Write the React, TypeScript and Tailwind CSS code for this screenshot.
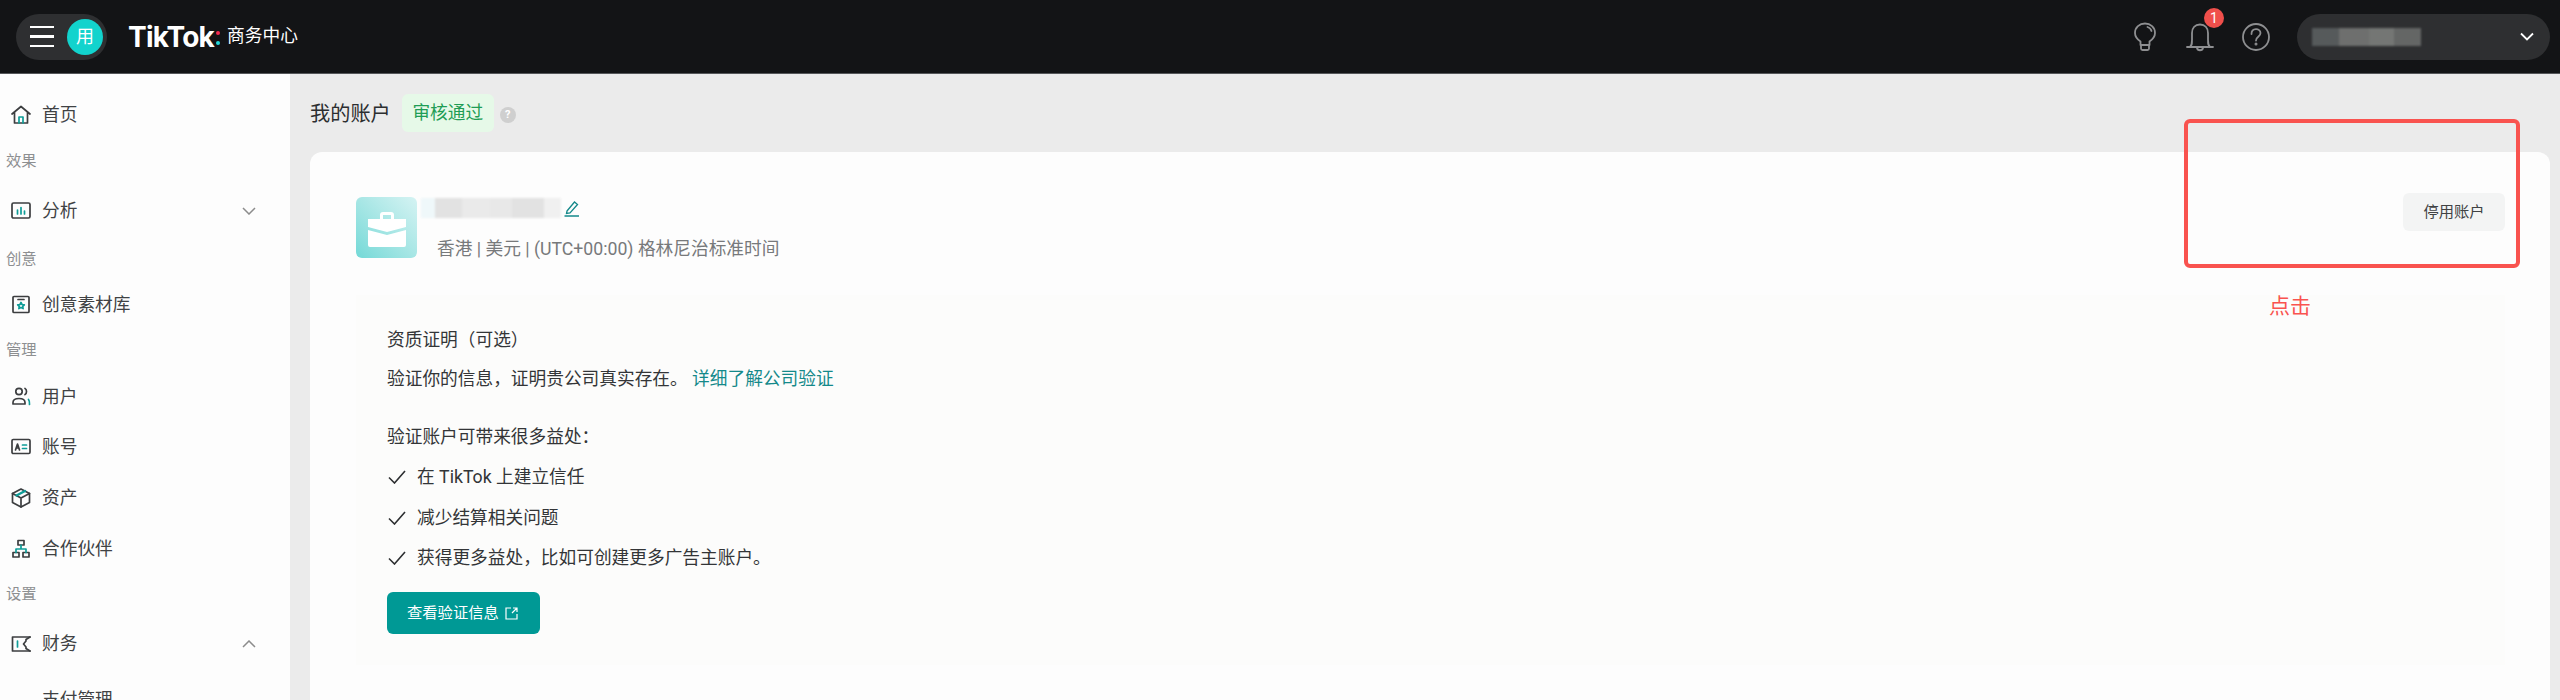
import React from "react";

const font = { fontFamily: 'Roboto, "Noto Sans CJK SC", sans-serif' };

function I({ children, size = 22 }: { children: React.ReactNode; size?: number }) {
  return (
    <svg width={size} height={size} viewBox="0 0 22 22" fill="none" strokeWidth="1.7" stroke="#3c3e40" strokeLinecap="round" strokeLinejoin="round" className="shrink-0">
      {children}
    </svg>
  );
}
const T = "#0f9d98";

const HomeIcon = () => (
  <I>
    <path d="M2 10 11 2.500 20 10M4.500 8.500V19h13V8.500" />
    <path d="M9 19v-6h4v6" stroke={T} />
  </I>
);
const ChartIcon = () => (
  <I>
    <rect x="2" y="3" width="18" height="15" rx="1.500" />
    <path d="M7.500 14V10M11 14V7.500M14.500 14v-3" stroke={T} />
  </I>
);
const LibIcon = () => (
  <I>
    <rect x="3" y="2.500" width="16" height="16" rx="1" />
    <path d="M8 5.500h6" />
    <path d="m11 8.500 1 2 2.300.3-1.600 1.600.4 2.200-2.100-1-2.100 1 .4-2.200L7.700 10.800 10 10.500z" stroke={T} />
  </I>
);
const UserIcon = () => (
  <I>
    <circle cx="9" cy="5.500" r="3.200" />
    <path d="M3 18v-1.500C3 13.500 5 12.500 9 12.500s6 1 6 4V18z" />
    <path d="M15 2.500c2 1 2 5 0 6" />
    <path d="M18.500 13.500c1 1.300 1.200 3 1 5" stroke={T} />
  </I>
);
const CardIcon = () => (
  <I>
    <rect x="2" y="3.500" width="18" height="14" rx="1.200" />
    <path d="m5.500 14 2-6 2 6M6.300 12h2.400" />
    <path d="M12.500 9h4M12.500 12.500h4" stroke={T} />
  </I>
);
const BoxIcon = () => (
  <I>
    <path d="m11 2 8.500 4.500v9L11 20l-8.500-4.500v-9z" />
    <path d="M2.500 6.500 11 11l8.500-4.500M11 11v9" />
    <path d="m6.500 8.500 8.500-4.500" stroke={T} strokeWidth="2.500" />
  </I>
);
const OrgIcon = () => (
  <I>
    <rect x="8" y="2.500" width="6" height="4.500" />
    <rect x="3" y="14.500" width="6" height="4.500" />
    <rect x="13" y="14.500" width="6" height="4.500" />
    <path d="M11 7v4M6 14.500V11h10v3.500" stroke={T} />
  </I>
);
const WalletIcon = () => (
  <I>
    <path d="M20 4H2.500v14H20" />
    <path d="M20 4l-4 2.500v1.500l-2.500 3 2.500 3v1.500l4 2.500" />
    <path d="M7.500 8v6" stroke={T} />
  </I>
);

const Chevron = ({ up }: { up?: boolean }) => (
  <svg width="14" height="8" viewBox="0 0 14 8" fill="none" stroke="#8c8c8c" strokeWidth="1.500" className="absolute left-[242px]">
    <path d={up ? "M1 7l6-6 6 6" : "M1 1l6 6 6-6"} />
  </svg>
);

function Item({ icon, label, cls, chev }: { icon?: React.ReactNode; label: string; cls: string; chev?: "up" | "down" }) {
  return (
    <div className={`relative flex h-12 items-center pl-[10px] text-[17.700px] text-[#404244] ${cls}`}>
      <span className="flex w-[32px]">{icon}</span>
      <span>{label}</span>
      {chev && <Chevron up={chev === "up"} />}
    </div>
  );
}
function Group({ label, cls }: { label: string; cls: string }) {
  return <div className={`flex h-7 items-center pl-[6px] text-[15.300px] text-[#8d8f91] ${cls}`}>{label}</div>;
}

function Check({ text, cls }: { text: string; cls: string }) {
  return (
    <div className={`flex h-[26px] items-center ${cls}`}>
      <svg width="18" height="14" viewBox="0 0 18 14" fill="none" stroke="#2c2e30" strokeWidth="1.600" className="mr-[11px] ml-[1px]">
        <path d="M1 7.500 6.500 13 17 1" />
      </svg>
      <span>{text}</span>
    </div>
  );
}

export default function App() {
  return (
    <div style={font} className="relative flex h-[700px] w-[2560px] flex-col overflow-hidden bg-[#ebebeb]">
      <header className="flex h-[74px] shrink-0 items-center border-b border-[#55575a] bg-[#131416] pl-4 pr-[10px]">
        <div className="flex h-[46px] w-[91px] items-center rounded-full bg-[#2e2f31] pl-[14px]">
          <div className="flex w-[24px] flex-col gap-[7px]">
            <span className="h-[2.500px] bg-white"></span>
            <span className="h-[2.500px] bg-white"></span>
            <span className="h-[2.500px] bg-white"></span>
          </div>
          <div className="ml-[13px] flex h-9 w-9 items-center justify-center rounded-full bg-[#12d3cd] text-[18px] text-white">用</div>
        </div>
        <div className="ml-[21px] flex items-center">
          <span style={{ fontFamily: "Inter, sans-serif" }} className="text-[28px] font-bold leading-none tracking-[-0.8px] text-white">TikTok</span>
          <span className="ml-[2px] mt-[3px] flex flex-col gap-[6px]">
            <span className="h-[4px] w-[4px] rounded-full bg-[#f5294f]"></span>
            <span className="h-[4px] w-[4px] rounded-full bg-[#25d8d8]"></span>
          </span>
          <span className="ml-[7px] text-[17.700px] text-white">商务中心</span>
        </div>
        <div className="ml-auto flex items-center">
          <svg width="24" height="30" viewBox="0 0 24 30" fill="none" stroke="#8e8f91" strokeWidth="1.800" strokeLinecap="round" strokeLinejoin="round">
            <path d="M7.500 23v-3.500C4.500 17.500 2 14.500 2 11 2 5.500 6.500 1.500 12 1.500S22 5.500 22 11c0 3.500-2.500 6.500-5.500 8.500V23z" />
            <path d="M8 23v3.500c0 1 .5 1.500 1.500 1.500h5c1 0 1.500-.5 1.500-1.500V23M14.500 5c2 .5 3.500 2 4 4" />
          </svg>
          <div className="relative ml-[28px] h-[30px] w-[30px]">
            <svg width="30" height="30" viewBox="0 0 30 30" fill="none" stroke="#8e8f91" strokeWidth="1.800" strokeLinecap="round" strokeLinejoin="round">
              <path d="M2 25h26M5 25c2-2 2-3 2-7v-7C7 6 10 2.500 15 2.500S23 6 23 11v7c0 4 0 5 2 7M12 26c.5 3 5.500 3 6 0" />
            </svg>
            <span className="absolute left-[19px] top-[-14px] flex h-5 w-5 items-center justify-center rounded-full bg-[#f04f4b] text-[14px] leading-none text-white">1</span>
          </div>
          <svg width="30" height="30" viewBox="0 0 30 30" fill="none" stroke="#8e8f91" strokeWidth="1.800" strokeLinecap="round" className="ml-[26px]">
            <circle cx="15" cy="15" r="13" />
            <path d="M10.500 12c0-6.500 9-6 9-1 0 4-4.500 3.500-4.500 7.500" />
            <circle cx="15" cy="22" r="0.600" />
          </svg>
          <div className="relative ml-[26px] flex h-[46px] w-[253px] items-center rounded-full bg-[#2e2f31]">
            <span className="ml-[15px] flex h-[18px] w-[109px] blur-[1px]">
              <span className="w-[27px] bg-[#565a5b]"></span>
              <span className="w-[30px] bg-[#6e6f6e]"></span>
              <span className="w-[25px] bg-[#747674]"></span>
              <span className="w-[27px] bg-[#646665]"></span>
            </span>
            <svg width="14" height="9" viewBox="0 0 14 9" fill="none" stroke="#ffffff" strokeWidth="1.800" className="absolute right-[16px]">
              <path d="M1 1.500 7 7.500l6-6" />
            </svg>
          </div>
        </div>
      </header>

      <div className="flex min-h-0 flex-1">
        <aside className="w-[290px] shrink-0 overflow-hidden bg-[#fdfdfd] pt-[17px]">
          <Item icon={<HomeIcon />} label="首页" cls="" />
          <Group label="效果" cls="mt-2" />
          <Item icon={<ChartIcon />} label="分析" cls="mt-[12px]" chev="down" />
          <Group label="创意" cls="mt-[10px]" />
          <Item icon={<LibIcon />} label="创意素材库" cls="mt-2" />
          <Group label="管理" cls="mt-[7px]" />
          <Item icon={<UserIcon />} label="用户" cls="mt-[9px]" />
          <Item icon={<CardIcon />} label="账号" cls="mt-[2px]" />
          <Item icon={<BoxIcon />} label="资产" cls="mt-[3px]" />
          <Item icon={<OrgIcon />} label="合作伙伴" cls="mt-[3px]" />
          <Group label="设置" cls="mt-[7px]" />
          <Item icon={<WalletIcon />} label="财务" cls="mt-[12px]" chev="up" />
          <Item label="支付管理" cls="mt-[8px]" />
        </aside>

        <main className="min-w-0 flex-1 pl-5 pr-[10px] pt-[20px]">
          <div className="flex h-[38px] items-center">
            <span className="mt-[2px] text-[20.200px] text-[#2c2e30]">我的账户</span>
            <span className="ml-[11px] flex h-[38px] w-[92px] items-center justify-center rounded-md bg-[#e6f9e8] text-[17.700px] text-[#1f9d55]">审核通过</span>
            <span className="ml-[6px] mt-[4px] flex h-4 w-4 items-center justify-center rounded-full bg-[#cfcfcf] text-[11px] font-bold text-white">?</span>
          </div>

          <section className="mt-5 h-[600px] rounded-t-xl bg-[#fdfdfd] pl-[46px] pr-[45px] pt-[44px]">
            <div className="flex items-start">
              <div className="relative mt-[1px] flex h-[61px] w-[61px] shrink-0 items-center justify-center overflow-hidden rounded-md bg-linear-to-tr from-[#72d9d7] to-[#d5f3f3]">
                <svg width="40" height="38" viewBox="0 0 40 38" fill="#ffffff" className="mt-[4px]">
                  <path d="M13 8V4a3 3 0 0 1 3-3h8a3 3 0 0 1 3 3v4h-3V4h-8v4z" />
                  <path d="M1 8h38v8L20 21 1 16zM1 19l19 5 19-5v15a2 2 0 0 1-2 2H3a2 2 0 0 1-2-2z" />
                </svg>
              </div>
              <div className="ml-[4px] mt-[1px] min-w-0">
                <div className="flex h-[25px] items-start">
                  <span className="relative mt-[1px] flex h-5 w-[140px] blur-[1px]">
                    <span className="w-[14px] bg-[#eff8fa]"></span>
                    <span className="w-[27px] bg-[#e2e2e2]"></span>
                    <span className="w-[28px] bg-[#eaeaea]"></span>
                    <span className="w-[22px] bg-[#e8e8e8]"></span>
                    <span className="w-[32px] bg-[#e2e2e2]"></span>
                    <span className="w-[17px] bg-[#f0f0f0]"></span>
                  </span>
                  <svg width="16" height="17" viewBox="0 0 16 17" fill="none" stroke="#14898a" strokeWidth="1.300" className="ml-[3px] mt-[3px]">
                    <path d="M3 11 10.500 2l3 2.500L6 13l-3.500.5zM.5 16h14.500" />
                  </svg>
                </div>
                <div className="ml-[16px] mt-[14px] whitespace-nowrap text-[17.700px] leading-[26px] text-[#77797b]">香港 | 美元 | (UTC+00:00) 格林尼治标准时间</div>
              </div>
              <button className="ml-auto mt-[-3px] h-[38px] w-[102px] rounded-md bg-[#f3f4f4] text-[15.300px] text-[#404244]">停用账户</button>
            </div>

            <div className="mt-[33px] h-[370px] bg-[#fcfcfb] pl-[31px] pt-[32px] text-[17.700px] text-[#333537]">
              <div className="h-[26px] leading-[26px]">资质证明（可选）</div>
              <div className="mt-[13px] h-[26px] leading-[26px]">
                验证你的信息，证明贵公司真实存在。 <span className="text-[#14898a]">详细了解公司验证</span>
              </div>
              <div className="mt-[32px] h-[26px] leading-[26px]">验证账户可带来很多益处：</div>
              <Check text="在 TikTok 上建立信任" cls="mt-[14px]" />
              <Check text="减少结算相关问题" cls="mt-[15px]" />
              <Check text="获得更多益处，比如可创建更多广告主账户。" cls="mt-[14px]" />
              <button className="mt-[21px] flex h-[42px] w-[153px] items-center rounded-md bg-[#009995] pl-[20px] text-[15.300px] text-white">
                查看验证信息
                <svg width="13" height="13" viewBox="0 0 13 13" fill="none" stroke="#ffffff" strokeWidth="1.200" className="ml-[6px]">
                  <path d="M6 1H1v11h11V7M8 1h4v4M12 1 7 6" />
                </svg>
              </button>
            </div>
          </section>
        </main>
      </div>

      <div className="absolute left-[2184px] top-[119px] h-[149px] w-[336px] rounded-[6px] border-[4px] border-[#f9534f]"></div>
      <div className="absolute left-[2269px] top-[291px] text-[21px] leading-[30px] text-[#f9534f]">点击</div>
    </div>
  );
}
